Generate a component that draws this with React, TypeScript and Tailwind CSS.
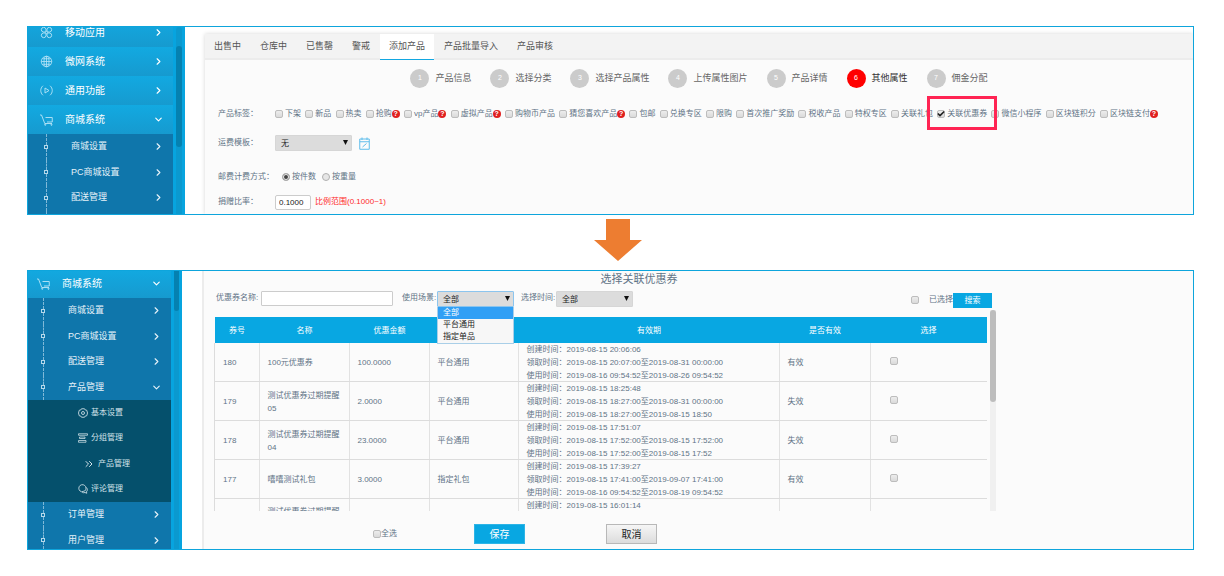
import { useState } from "react";
import type { ReactNode } from "react";
import clsx from "clsx";
import { Check, ChevronDown, ChevronRight, ChevronsRight } from "lucide-react";

const CloverIcon = () => (
    <svg className="size-[13px]" viewBox="0 0 26 26" fill="none" stroke="currentColor" strokeWidth="1.8">
        <path d="M12 12H6.500A4.700 4.700 0 1 1 12 6.500Z" />
        <path d="M14 12h5.500A4.700 4.700 0 1 0 14 6.500Z" />
        <path d="M12 14H6.500A4.700 4.700 0 1 0 12 19.500Z" />
        <path d="M14 14h5.500A4.700 4.700 0 1 1 14 19.500Z" />
    </svg>
);

const GlobeIcon = () => (
    <svg className="size-[13px]" viewBox="0 0 26 26" fill="none" stroke="currentColor" strokeWidth="1.6">
        <circle cx="13" cy="13" r="10.500" />
        <ellipse cx="13" cy="13" rx="5" ry="10.500" />
        <path d="M13 2.500v21M2.500 13h21M4.500 7.500h17M4.500 18.500h17" />
    </svg>
);

const PlayIcon = () => (
    <svg className="size-[13px]" viewBox="0 0 26 26" fill="none" stroke="currentColor" strokeWidth="1.8">
        <path d="M6 3.500C0 8.500 0 17.500 6 22.500M20 3.500c6 5 6 14 0 19" />
        <path d="M10 8l8 5-8 5Z" strokeLinejoin="round" />
    </svg>
);

const CartIcon = () => (
    <svg className="size-[13px]" viewBox="0 0 26 26" fill="none" stroke="currentColor" strokeWidth="1.8">
        <path d="M0 4h3l6.500 17H24M11 9h13.500v9H14" strokeLinejoin="round" />
        <circle cx="10.500" cy="23.500" r="1.200" />
        <circle cx="23" cy="23.500" r="1.200" />
    </svg>
);

const GearIcon = () => (
    <svg className="size-[10px]" viewBox="0 0 20 20" fill="none" stroke="currentColor" strokeWidth="1.7">
        <path d="M7 1.500h6l1.500 2.500 3 .5L19 10l-1.500 5.500-3 .5-1.500 2.500H7L5.500 16l-3-.5L1 10l1.500-5.500 3-.5Z" strokeLinejoin="round" />
        <circle cx="10" cy="10" r="3" />
    </svg>
);

const GroupIcon = () => (
    <svg className="size-[10px]" viewBox="0 0 20 20" fill="none" stroke="currentColor" strokeWidth="1.5">
        <path d="M1 1.500h18v3H1ZM3 8h11v3H3ZM1 15h15v3.500H1Z" />
    </svg>
);

const CommentIcon = () => (
    <svg className="size-[10px]" viewBox="0 0 20 20" fill="none" stroke="currentColor" strokeWidth="1.7">
        <path d="M7 15.500a7.200 7.200 0 1 1 6.500-1.500L7 15.500Z" />
        <path d="M17 7c2.500 3 2 6.500 0 8.500l.5 3-3.500-1.500c-2 .7-4 .5-5.500 0" />
    </svg>
);

const CalendarIcon = () => (
    <svg className="h-[13px] w-[11px]" viewBox="0 0 22 26" fill="none" stroke="#5fbdeb" strokeWidth="2">
        <path d="M1.500 4h19v20.500h-19ZM1.500 9.500h19M6 1v5M16 1v5M7 20l8-7" />
    </svg>
);

const Arrow = ({ open }: { open?: boolean }) =>
    open ? <ChevronDown className="size-[11px]" strokeWidth={2.5} /> : <ChevronRight className="size-[11px]" strokeWidth={2.5} />;

const MenuRow = ({ icon, text, open, pad }: { icon: ReactNode; text: string; open?: boolean; pad: string }) => (
    <a
        href="#"
        className={clsx("flex h-[29px] shrink-0 items-center bg-linear-to-b from-[#12a9e1] to-[#169acf] pr-[9px] text-[10px] text-white", pad)}
    >
        <span className="w-[13px] text-[#b9e5f7]">{icon}</span>
        <span className="ml-3 flex-1">{text}</span>
        <Arrow open={open} />
    </a>
);

const TreeMark = () => (
    <span className="flex w-3 flex-col items-center self-stretch">
        <span className="flex-1 border-l border-dashed border-[#7fb9d8]" />
        <span className="size-1 border border-[#b5d8ea]" />
        <span className="flex-1 border-l border-dashed border-[#7fb9d8]" />
    </span>
);

const SubRow = ({ text, open, pad }: { text: string; open?: boolean; pad: string }) => (
    <a href="#" className={clsx("flex flex-1 items-center pr-[9px] text-[9px] text-[#e6f2f9]", pad)}>
        <TreeMark />
        <span className="ml-[19px] flex-1">{text}</span>
        <Arrow open={open} />
    </a>
);

const Box = ({ checked, label }: { checked?: boolean; label?: string }) => (
    <span className="relative flex shrink-0">
        <input
            type="checkbox"
            defaultChecked={checked}
            aria-label={label}
            className="peer size-2 appearance-none rounded-[2px] border border-[#bdbdbd] bg-linear-to-b from-[#ededed] to-[#dadada]"
        />
        <Check className="pointer-events-none absolute inset-0 hidden size-2 text-[#222] peer-checked:block" strokeWidth={5} />
    </span>
);

const Select = ({ id, options, focused }: { id: string; options: string[]; focused?: boolean }) => (
    <span className="relative flex">
        <select
            id={id}
            className={clsx(
                "h-4 w-[77px] appearance-none rounded-[1px] border bg-[#dcdcdc] px-[5px] pt-[2px] text-[8px] text-[#222] outline-none",
                focused ? "border-[#8cc5ee]" : "border-[#d6d6d6]"
            )}
        >
            {options.map((o) => <option key={o}>{o}</option>)}
        </select>
        <svg className="pointer-events-none absolute top-[5px] right-1 h-[5px] w-[5px]" viewBox="0 0 10 10">
            <path d="M0 0h10L5 10Z" fill="#111" />
        </svg>
    </span>
);

const tabs = ["出售中", "仓库中", "已售罄", "警戒", "添加产品", "产品批量导入", "产品审核"];
const steps = ["产品信息", "选择分类", "选择产品属性", "上传属性图片", "产品详情", "其他属性", "佣金分配"];

const tags = [
    { name: "下架" },
    { name: "新品" },
    { name: "热卖" },
    { name: "抢购", help: true },
    { name: "vp产品", help: true },
    { name: "虚拟产品", help: true },
    { name: "购物币产品" },
    { name: "猜您喜欢产品", help: true },
    { name: "包邮" },
    { name: "兑换专区" },
    { name: "限购" },
    { name: "首次推广奖励" },
    { name: "税收产品" },
    { name: "特权专区" },
    { name: "关联礼包" },
    { name: "关联优惠券", marked: true },
    { name: "微信小程序" },
    { name: "区块链积分" },
    { name: "区块链支付", help: true },
];

const coupons = [
    { id: "180", name: "100元优惠券", amount: "100.0000", scene: "平台通用", created: "2019-08-15 20:06:06", receive: "2019-08-15 20:07:00至2019-08-31 00:00:00", use: "2019-08-16 09:54:52至2019-08-26 09:54:52", valid: "有效" },
    { id: "179", name: "测试优惠券过期提醒05", amount: "2.0000", scene: "平台通用", created: "2019-08-15 18:25:48", receive: "2019-08-15 18:27:00至2019-08-31 00:00:00", use: "2019-08-15 18:27:00至2019-08-15 18:50", valid: "失效" },
    { id: "178", name: "测试优惠券过期提醒04", amount: "23.0000", scene: "平台通用", created: "2019-08-15 17:51:07", receive: "2019-08-15 17:52:00至2019-08-15 17:52:00", use: "2019-08-15 17:52:00至2019-08-15 17:52", valid: "失效" },
    { id: "177", name: "嘻嘻测试礼包", amount: "3.0000", scene: "指定礼包", created: "2019-08-15 17:39:27", receive: "2019-08-15 17:41:00至2019-09-07 17:41:00", use: "2019-08-16 09:54:52至2019-08-19 09:54:52", valid: "有效" },
];

const columns = [
    { title: "券号", width: "w-[45px]" },
    { title: "名称", width: "w-[90px]" },
    { title: "优惠金额", width: "w-[80px]" },
    { title: "", width: "w-[89px]" },
    { title: "有效期", width: "w-[261px]" },
    { title: "是否有效", width: "w-[91px]" },
    { title: "选择", width: "w-[116px]" },
];

const cell = "px-2 shadow-[inset_0_-1px_0_#dcdcdc,inset_-1px_0_0_#e2e2e2]";

const ProductPanel = () => {
    const [activeTab, setActiveTab] = useState("添加产品");

    return (
        <section className="flex h-[189px] overflow-hidden border border-[#0ea5dc]">
            <nav className="-mt-[9px] flex w-[145px] shrink-0 flex-col bg-[#0f76ab]">
                <MenuRow pad="pl-3" icon={<CloverIcon />} text="移动应用" />
                <MenuRow pad="pl-3" icon={<GlobeIcon />} text="微网系统" />
                <MenuRow pad="pl-3" icon={<PlayIcon />} text="通用功能" />
                <MenuRow pad="pl-3" icon={<CartIcon />} text="商城系统" open />
                <div className="flex h-[102px] shrink-0 flex-col">
                    <SubRow pad="pl-3" text="商城设置" />
                    <SubRow pad="pl-3" text="PC商城设置" />
                    <SubRow pad="pl-3" text="配送管理" />
                    <div className="flex flex-1 pl-3"><TreeMark /></div>
                </div>
            </nav>
            <div className="w-3 shrink-0 bg-[#07a4df] px-[3px]">
                <div className="h-full rounded-t bg-[#0b99cf] pt-[19px]">
                    <div className="h-[101px] rounded bg-[#0581b0]" />
                </div>
            </div>

            <div className="min-w-0 flex-1 pt-[7px] pl-5">
                <div className="h-full bg-[#fbfbfb] shadow-[0_0_4px_#d5d5d5]">
                    <div className="flex h-[26px] gap-px border-b-2 border-[#ececec] bg-[#f3f3f3]">
                        {tabs.map((t) => (
                            <button
                                key={t}
                                onClick={() => setActiveTab(t)}
                                className={clsx(
                                    "-mb-[2px] px-[9px] text-[9px] text-[#555]",
                                    t === activeTab && "bg-white shadow-[inset_0_-1px_0_#13a7e1]"
                                )}
                            >
                                {t}
                            </button>
                        ))}
                    </div>

                    <ol className="mt-[9px] flex justify-center gap-[19px] text-[9px] text-[#666]">
                        {steps.map((s, i) => (
                            <li key={s} className="flex items-center gap-[6px]">
                                <span
                                    className={clsx(
                                        "flex size-[19px] items-center justify-center rounded-full text-[7px] text-white",
                                        i === 5 ? "bg-[#ff0000]" : "bg-[#cbcbcb]"
                                    )}
                                >
                                    {i + 1}
                                </span>
                                <span className={clsx(i === 5 && "text-[#333]")}>{s}</span>
                            </li>
                        ))}
                    </ol>

                    <form className="mt-[18px] pl-[13px] text-[8px] text-[#5f7386]">
                        <div className="flex h-4 items-center pr-[35px]">
                            <span className="w-[57px] shrink-0">产品标签：</span>
                            <div className="flex flex-1 justify-between whitespace-nowrap">
                                {tags.map((t) => (
                                    <label key={t.name} className="relative flex h-4 items-center gap-[2px]">
                                        <Box checked={t.marked} />
                                        <span className="flex items-center">
                                            {t.name}
                                            {t.help && (
                                                <span className="flex size-2 items-center justify-center rounded-full bg-[#e02020] text-[7px] leading-[8px] font-bold text-white">?</span>
                                            )}
                                        </span>
                                        {t.marked && (
                                            <span className="pointer-events-none absolute -top-[10px] -right-[10px] -bottom-2 -left-[10px] z-10 border-3 border-[#ff2453]" />
                                        )}
                                    </label>
                                ))}
                            </div>
                        </div>
                        <div className="mt-[13px] flex h-4 items-center">
                            <label htmlFor="freight" className="w-[57px]">运费模板：</label>
                            <Select id="freight" options={["无"]} />
                            <button type="button" aria-label="编辑" className="ml-[7px]"><CalendarIcon /></button>
                        </div>
                        <div className="mt-[18px] flex h-4 items-center">
                            <span className="w-16">邮费计费方式：</span>
                            {["按件数", "按重量"].map((r, i) => (
                                <label key={r} className="mr-[6px] flex items-center gap-[2px]">
                                    <input
                                        type="radio"
                                        name="billing"
                                        defaultChecked={i === 0}
                                        className="size-2 appearance-none rounded-full border border-[#b0b0b0] bg-[#e6e6e6] checked:bg-[#444] checked:shadow-[inset_0_0_0_1px_#eee]"
                                    />
                                    {r}
                                </label>
                            ))}
                        </div>
                        <div className="mt-[9px] flex h-4 items-center">
                            <label htmlFor="ratio" className="w-[57px]">捐赠比率：</label>
                            <input id="ratio" defaultValue="0.1000" className="h-[15px] w-9 rounded-[2px] border border-[#ccc] bg-white px-[3px] text-[#222]" />
                            <span className="ml-1 text-[#ff2a2a]">比例范围(0.1000~1)</span>
                        </div>
                    </form>
                </div>
            </div>
        </section>
    );
};

const CouponPanel = () => (
    <section className="flex h-[280px] overflow-hidden border border-[#0ea5dc]">
        <nav className="-mt-[2px] flex w-[143px] shrink-0 flex-col bg-[#0f76ab]">
            <MenuRow pad="pl-[9px]" icon={<CartIcon />} text="商城系统" open />
            <div className="flex h-[102px] shrink-0 flex-col">
                <SubRow pad="pl-[9px]" text="商城设置" />
                <SubRow pad="pl-[9px]" text="PC商城设置" />
                <SubRow pad="pl-[9px]" text="配送管理" />
                <SubRow pad="pl-[9px]" text="产品管理" open />
            </div>
            <div className="flex h-[102px] shrink-0 flex-col bg-[#05506c] text-[8px] text-[#d3e3ea]">
                <a href="#" className="flex flex-1 items-center gap-[3px] pl-[50px]"><GearIcon />基本设置</a>
                <a href="#" className="flex flex-1 items-center gap-[3px] pl-[50px]"><GroupIcon />分组管理</a>
                <a href="#" className="flex flex-1 items-center gap-[3px] pl-[55px]"><ChevronsRight className="size-3" />产品管理</a>
                <a href="#" className="flex flex-1 items-center gap-[3px] pl-[50px]"><CommentIcon />评论管理</a>
            </div>
            <div className="flex h-[51px] shrink-0 flex-col">
                <SubRow pad="pl-[9px]" text="订单管理" />
                <SubRow pad="pl-[9px]" text="用户管理" />
            </div>
        </nav>
        <div className="w-[11px] shrink-0 bg-[#07a4df] px-[3px]">
            <div className="h-full bg-[#0b99cf]">
                <div className="h-10 rounded-b bg-[#0581b0]" />
            </div>
        </div>

        <div className="min-w-0 flex-1 pl-5">
            <div className="h-full border-l-2 border-[#ececec] bg-[#fbfbfb] text-[8px] text-[#5f7386]">
                <h2 className="w-[870px] text-center text-[11px] leading-4">选择关联优惠券</h2>

                <form className="mt-1 flex h-[17px] w-[788px] items-start pl-3">
                    <label htmlFor="coupon" className="w-[45px] leading-[13px]">优惠券名称:</label>
                    <input id="coupon" className="h-[15px] w-[132px] rounded-[1px] border border-[#ccc] bg-white px-1" />
                    <label htmlFor="scene" className="ml-[9px] w-[35px] leading-[13px]">使用场景:</label>
                    <div className="relative">
                        <Select id="scene" options={["全部", "平台通用", "指定单品"]} focused />
                        <ul className="absolute top-4 left-0 z-10 w-[77px] border border-t-0 border-[#a9cfe8] bg-[#f7f7f7] leading-3 text-[#222]">
                            <li className="bg-[#309ff5] px-[5px] text-white">全部</li>
                            <li className="px-[5px]">平台通用</li>
                            <li className="px-[5px]">指定单品</li>
                        </ul>
                    </div>
                    <label htmlFor="time" className="ml-[7px] w-[35px] leading-[13px]">选择时间:</label>
                    <Select id="time" options={["全部"]} />
                    <label className="ml-auto flex items-center gap-[10px] self-end leading-4">
                        <Box />
                        已选择
                    </label>
                    <button type="button" className="h-[15px] w-[39px] self-end bg-[#08a7e2] text-white">搜索</button>
                </form>

                <div className="mt-[2px] flex h-[201px] overflow-hidden pl-[10px]">
                    <div className="pt-[7px]">
                        <table className="w-[772px] table-fixed leading-[13px]">
                            <thead>
                                <tr className="h-[26px] bg-[#08a7e2] text-white">
                                    {columns.map((c, i) => <th key={i} className={clsx("font-normal", c.width)}>{c.title}</th>)}
                                </tr>
                            </thead>
                            <tbody className="border-l border-[#dcdcdc]">
                                {coupons.map((c) => (
                                    <tr key={c.id} className="h-[39px]">
                                        <td className={cell}>{c.id}</td>
                                        <td className={cell}>{c.name}</td>
                                        <td className={cell}>{c.amount}</td>
                                        <td className={cell}>{c.scene}</td>
                                        <td className={cell}>
                                            <p>创建时间：{c.created}</p>
                                            <p>领取时间：{c.receive}</p>
                                            <p>使用时间：{c.use}</p>
                                        </td>
                                        <td className={cell}>{c.valid}</td>
                                        <td className="pb-1 pl-[19px] shadow-[inset_0_-1px_0_#dcdcdc]"><Box label={c.id} /></td>
                                    </tr>
                                ))}
                                <tr className="h-[39px] align-top">
                                    <td className={cell} />
                                    <td className={clsx(cell, "pt-[6px]")}>测试优惠券过期提醒</td>
                                    <td className={cell} />
                                    <td className={cell} />
                                    <td className={cell}>创建时间：2019-08-15 16:01:14</td>
                                    <td className={cell} />
                                    <td />
                                </tr>
                            </tbody>
                        </table>
                    </div>
                    <div className="ml-[3px] h-full w-[6px] bg-[#f0f0f0]">
                        <div className="h-[92px] rounded bg-[#bdbdbd]" />
                    </div>
                </div>

                <div className="mt-[13px] flex h-5 items-center pl-[169px] text-[10px]">
                    <label className="flex items-center text-[8px]">
                        <Box />
                        全选
                    </label>
                    <button className="ml-[77px] h-5 w-[51px] border border-[#2db4e6] bg-[#08a7e2] text-white">保存</button>
                    <button className="ml-[81px] h-5 w-[51px] border border-[#b8b8b8] bg-linear-to-b from-[#f6f6f6] to-[#dcdcdc] text-[#222]">取消</button>
                </div>
            </div>
        </div>
    </section>
);

export default function App() {
    return (
        <main className="bg-white py-[26px] pr-[30px] pl-[27px] font-['Liberation_Sans','Noto_Sans_CJK_SC',sans-serif]">
            <ProductPanel />
            <div className="flex h-[55px] justify-center pt-1 pl-[14px]">
                <svg className="h-[42px] w-12" viewBox="0 0 48 42">
                    <path d="M12 0h24v21h12L24 42 0 21h12Z" fill="#ed7d31" />
                </svg>
            </div>
            <CouponPanel />
        </main>
    );
}
